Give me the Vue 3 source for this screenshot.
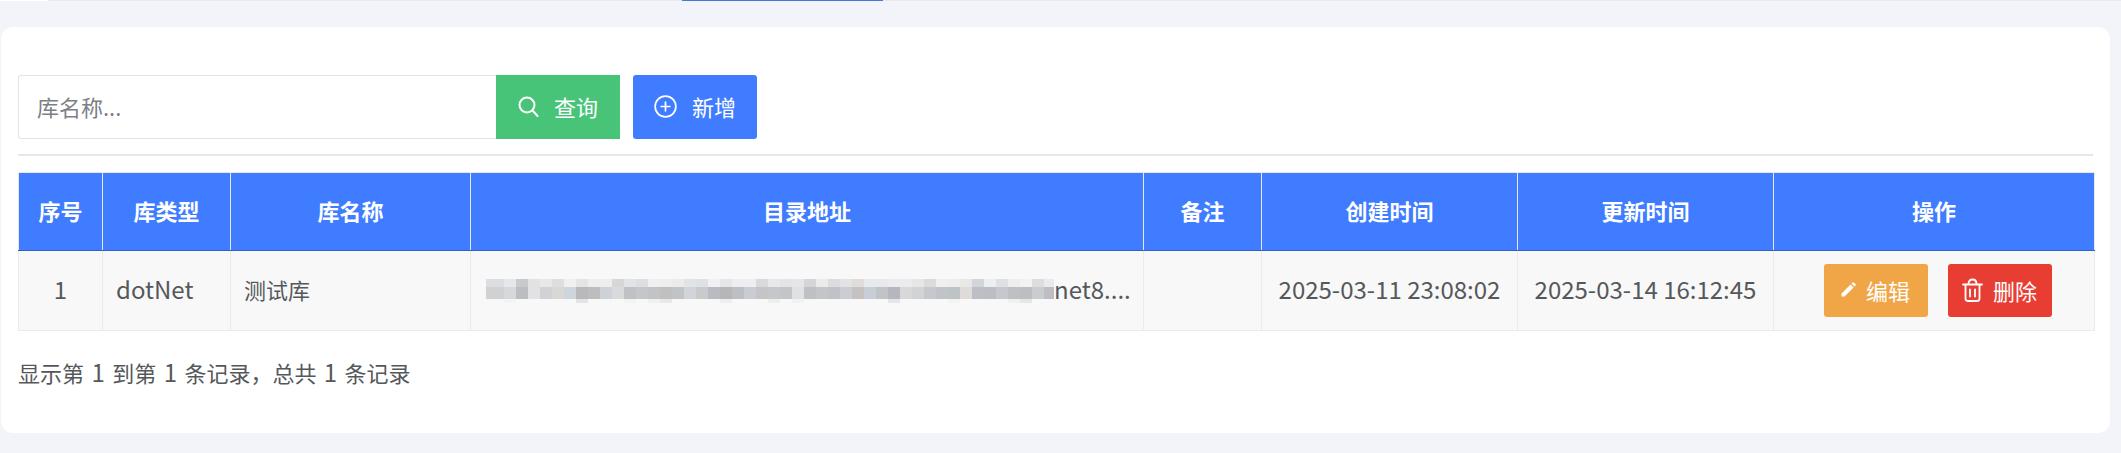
<template>
  <div class="page">
    <div class="topstrip">
      <span class="strip-white"></span>
      <span class="strip-gray"></span>
      <span class="strip-blue"></span>
      <span class="strip-rest"></span>
    </div>

    <div class="card">
      <!-- search -->
      <div class="toolbar">
        <input class="search" type="text" placeholder="库名称..." />
        <button class="btn btn-green">
          <svg class="ico ico-search" viewBox="0 0 21 21" fill="none" stroke="currentColor" stroke-width="2" stroke-linecap="round">
            <circle cx="9" cy="9" r="7.500" />
            <path d="M15 15l4.500 5" />
          </svg>
          查询
        </button>
        <button class="btn btn-blue">
          <svg class="ico" viewBox="0 0 24 24" fill="none" stroke="currentColor" stroke-width="1.800" stroke-linecap="round">
            <circle cx="12" cy="12" r="10.800" />
            <path d="M12 7.500v9M7.500 12h9" />
          </svg>
          新增
        </button>
      </div>

      <table class="tbl">
        <colgroup>
          <col v-for="w in widths" :key="w" :style="{ width: w + 'px' }" />
        </colgroup>
        <thead>
          <tr>
            <th v-for="h in headers" :key="h">{{ h }}</th>
          </tr>
        </thead>
        <tbody>
          <tr>
            <td class="center lat">1</td>
            <td class="lat">dotNet</td>
            <td>测试库</td>
            <td class="lat path-cell">
              <div class="path">
                <div class="mosaic">
                  <div v-for="(row, r) in mosaic" :key="r" class="m-row" :class="'m-row' + r">
                    <i v-for="(c, i) in row" :key="i" :style="{ background: c }"></i>
                  </div>
                </div>
                <span class="path-end">net8....</span>
              </div>
            </td>
            <td></td>
            <td class="center lat">2025-03-11 23:08:02</td>
            <td class="center lat">2025-03-14 16:12:45</td>
            <td class="center ops-cell">
              <div class="ops">
                <button class="btn-sm btn-orange">
                  <svg class="ico-sm" viewBox="0 0 15 15" fill="currentColor">
                    <path d="M0.500 11.500L9.500 2.500l3 3L3.500 14.500H0.500zM10.500 1.500l1-1a1 1 0 0 1 1.400 0l1.600 1.600a1 1 0 0 1 0 1.400l-1 1z" />
                  </svg>
                  编辑
                </button>
                <button class="btn-sm btn-red">
                  <svg class="ico-trash" viewBox="0 0 21 24" fill="none" stroke="currentColor" stroke-width="1.800" stroke-linecap="round">
                    <path d="M1 6.500h19M6.500 6C6.500 3 8 1.500 10.500 1.500S14.500 3 14.500 6M3.500 7v13.500a2.500 2.500 0 0 0 2.500 2.500h9a2.500 2.500 0 0 0 2.500-2.500V7M8 11.500v7M13 11.500v7" />
                  </svg>
                  删除
                </button>
              </div>
            </td>
          </tr>
        </tbody>
      </table>

      <div class="summary">显示第 <span class="lat">1</span> 到第 <span class="lat">1</span> 条记录，总共 <span class="lat">1</span> 条记录</div>
    </div>
  </div>
</template>

<script setup>
const headers = ['序号', '库类型', '库名称', '目录地址', '备注', '创建时间', '更新时间', '操作']
const widths = [84, 128, 240, 673, 118, 256, 256, 321]

/* colours of the blurred path */
const top = ['#dcdde0', '#e6e7e9', '#c9cacc', '#e1e2e4', '#e8e8e9', '#dcdee0', '#f0f0f1', '#e3e4e6', '#eeeeef', '#eeeeef', '#d6d8d7', '#e2e3e5', '#dddee1', '#f0f0f0', '#eeeeee', '#ecebea', '#e2e3e7', '#dfe2e4', '#f1f1f3', '#e6e6e9', '#eeeef0', '#eeeef0', '#d8d9da', '#e8e8ea',
  '#e4e4e6', '#e6e6e8', '#d4d5d7', '#ebebec', '#dcdcdf', '#e2e3e5', '#e0dcda', '#e6e9ee', '#e9e9ec', '#ebebee', '#ebebee', '#e6e6e8', '#dadbda', '#efefef', '#ededee', '#eae8e5', '#d2d5d9', '#edeef0', '#dfe0e3', '#eeeef1', '#f2f2f3', '#dcdddd', '#e9eaee']
const mid = ['#d0d1d3', '#d6d9db', '#bcbdc1', '#e1e2e4', '#d2d2d4', '#d9d8d6', '#cfd5dc', '#b8b9bd', '#bdbdbd', '#ced2d8', '#d8dadb', '#c0c1c4', '#c5c6c9', '#c2c3c6', '#c0c0c1', '#c0c4c7', '#d2d4da', '#c8cbcc', '#b9bbc1', '#b6b6b8', '#bcc0c4', '#c9ccd3', '#c5c5c7', '#c5c7cb',
  '#c3c5c9', '#e0e1e2', '#bfc0c3', '#c4c5c8', '#c0c2c5', '#cacdd1', '#c6c2c2', '#c9ced6', '#c2c3c6', '#b4b7bd', '#d8d8d8', '#d2d3d5', '#c6c8cb', '#c0c4c9', '#bec3c6', '#dedbd9', '#bcbfc4', '#bdbec2', '#c6c8cd', '#bfc0c4', '#bdbec1', '#cacdd0', '#bdbec2']
const faint = { 1: '#f4f4f5', 7: '#e4e4e6', 11: '#f3f3f4', 13: '#f0f0f1', 14: '#e8e8e9', 19: '#eeeeef', 23: '#eeeeef', 25: '#f2f2f3', 33: '#e6e6e6', 38: '#f3f3f3', 43: '#f0f0f1', 44: '#e6e6e8' }
const low = top.map((c, i) => faint[i] || 'transparent')
const mosaic = [top, mid, low]
</script>

<style>
html, body {
  margin: 0;
  background: #f3f4f9;
}
</style>

<style scoped>
.page {
  width: 2121px;
  height: 453px;
  overflow: hidden;
  font-family: "Noto Sans CJK SC", "Noto Sans", sans-serif;
  font-size: 22px;
  color: #55585b;
}

.lat { font-size: 24px; }

.topstrip {
  display: flex;
  height: 1px;
}
.strip-white { width: 48px; background: #fff; }
.strip-gray { width: 634px; background: #e8eaee; }
.strip-blue { width: 201px; background: #4678d8; }
.strip-rest { flex: 1; background: #e8eaee; }

.card {
  margin: 26px 11px 0 1px;
  height: 406px;
  box-sizing: border-box;
  padding: 48px 17px 0;
  background: #fff;
  border-radius: 12px;
}

.toolbar {
  display: flex;
  padding-bottom: 15px;
  border-bottom: 2px solid #e6e7ea;
  margin-bottom: 16px;
}

.search {
  width: 478px;
  height: 64px;
  box-sizing: border-box;
  padding: 0 18px 2px;
  border: 1px solid #e1e3e6;
  border-right: none;
  border-radius: 3px 0 0 3px;
  font: inherit;
  color: inherit;
  outline: none;
}
.search::placeholder { color: #7b8085; }

.btn {
  display: flex;
  align-items: center;
  justify-content: center;
  gap: 15px;
  width: 124px;
  height: 64px;
  padding: 0 0 2px;
  border: none;
  color: #fff;
  font: inherit;
}
.btn-green { background: #48c479; }
.btn-blue {
  margin-left: 13px;
  background: #3f7cff;
  border-radius: 3px;
}
.ico { width: 23px; height: 23px; }
.ico-search { width: 21px; height: 21px; }

.tbl {
  width: 2076px;
  table-layout: fixed;
  border-collapse: collapse;
}
th {
  height: 78px;
  box-sizing: border-box;
  padding: 0 0 3px;
  background: #3f7cff;
  border: 1px solid #e6e8ec;
  border-bottom: 1px solid #2f62c9;
  color: #fff;
  font-weight: 700;
}
td {
  height: 80px;
  box-sizing: border-box;
  padding: 0 13px 3px;
  background: #f8f8f8;
  border: 1px solid #ebebeb;
  white-space: nowrap;
  line-height: 30px;
}
td.center { text-align: center; }
td.path-cell, td.ops-cell { padding-bottom: 0; }

.path {
  display: flex;
  align-items: center;
  height: 30px;
}
.path-end { margin-top: -3px; }
.mosaic {
  flex: none;
  width: 568px;
  height: 24px;
  margin-left: 2px;
  overflow: hidden;
}
.m-row { display: flex; }
.m-row i { flex: none; width: 12px; }
.m-row i:first-child { width: 18px; }
.m-row0 i { height: 8px; }
.m-row1 i { height: 12px; }
.m-row2 i { height: 4px; }

.ops {
  display: flex;
  justify-content: center;
  gap: 20px;
  padding-left: 7px;
}
.btn-sm {
  display: flex;
  align-items: center;
  justify-content: center;
  gap: 10px;
  width: 104px;
  height: 53px;
  padding: 0 0 2px;
  border: none;
  border-radius: 3px;
  color: #fff;
  font: inherit;
}
.btn-orange { background: #f0a646; }
.btn-red { background: #e83d33; }
.ico-sm { width: 15px; height: 15px; }
.ico-trash { width: 21px; height: 24px; }

.summary {
  margin-top: 26px;
  line-height: 30px;
  word-spacing: 2.5px;
}
</style>
